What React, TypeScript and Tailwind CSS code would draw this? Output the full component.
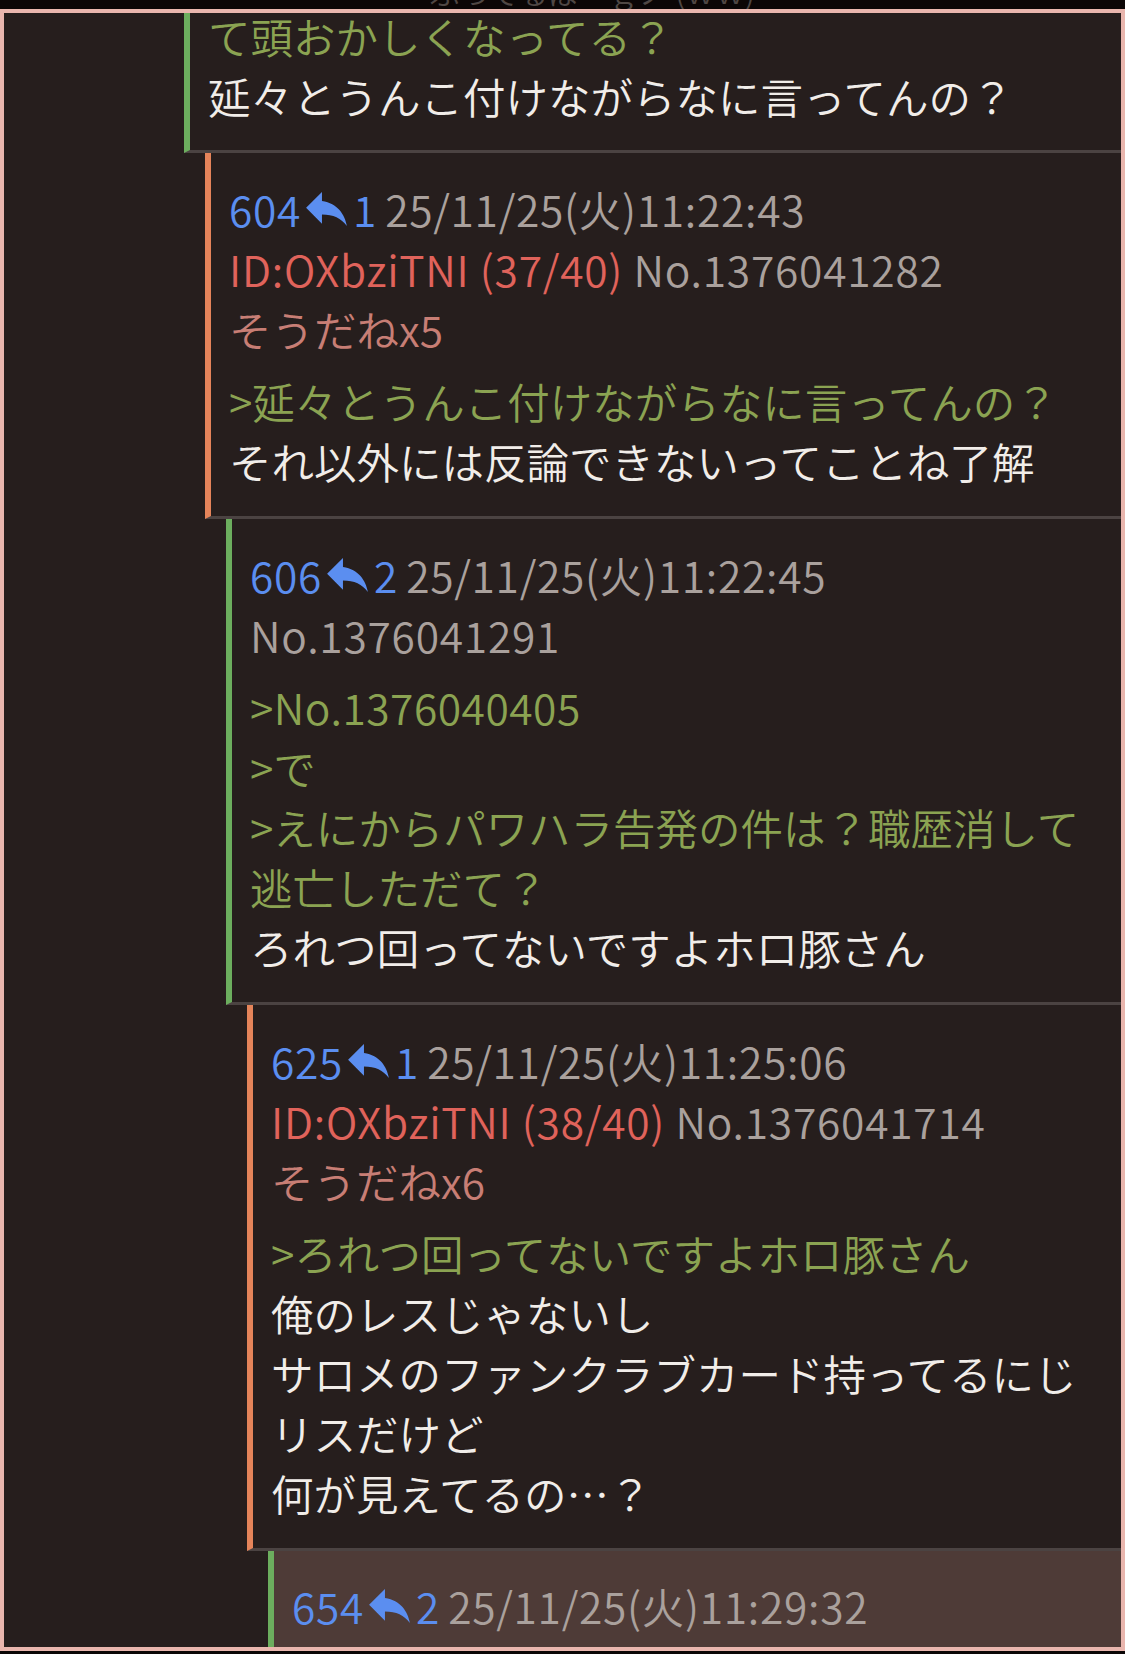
import React from "react";

const FONT = { fontFamily: '"Noto Sans CJK JP", "Noto Sans", sans-serif' };

function ReplyIcon() {
  return (
    <svg viewBox="3 5 18 15" width="41" height="34" className="ml-[5px] mr-[6px] shrink-0" aria-hidden>
      <path d="M10 9V5l-7 7 7 7v-4.1c5 0 8.5 1.6 11 5.1-1-5-4-10-11-11z" fill="#5b8ef0" />
    </svg>
  );
}

function Header({ no, replies, date }: { no: string; replies: string; date: string }) {
  return (
    <div className="flex items-center leading-[60px] whitespace-nowrap tracking-[0.7px]">
      <span className="text-[#5b8ef0]">{no}</span>
      <ReplyIcon />
      <span className="text-[#5b8ef0]">{replies}</span>
      <span className="ml-[8px] text-[#aaa19d]">{date}</span>
    </div>
  );
}

function IdLine({ id, count, num }: { id: string; count: string; num: string }) {
  return (
    <div className="leading-[60px] whitespace-nowrap tracking-[0.75px]">
      <span className="text-[#e0635b]">
        {id} {count}
      </span>{" "}
      <span className="text-[#aaa19d]">{num}</span>
    </div>
  );
}

function Soudane({ text }: { text: string }) {
  return <div className="leading-[60px] whitespace-nowrap text-[#c87e75]">{text}</div>;
}

function Quote({ text, latin }: { text: string; latin?: boolean }) {
  return (
    <div className={latin ? "leading-[60px] whitespace-nowrap text-[#8ba352] tracking-[0.5px]" : "leading-[60px] whitespace-nowrap text-[#8ba352]"}>
      {text}
    </div>
  );
}

function Body({ text }: { text: string }) {
  return <div className="leading-[60px] whitespace-nowrap text-[#f1ede9]">{text}</div>;
}

export default function App() {
  return (
    <div className="min-h-[1654px] w-[1125px] bg-[#0b0606] text-[42.5px] font-[350]" style={FONT}>
      <div className="h-[9px] overflow-hidden flex flex-col items-center">
        <div className="leading-[30px] h-[30px] shrink-0 text-[30px] text-[#4f4744] whitespace-nowrap -mt-[24px] pl-[60px]">
          ぶってるぽ～ｇノ (ｗｗ)
        </div>
      </div>
      <div className="h-[1642px] border-[4px] border-[#e9b6ae] bg-[#261e1d] overflow-hidden">
        {/* post 1 (continued from above) */}
        <div className="ml-[180px] -mt-[7px] border-l-[6px] border-b-[3px] border-l-[#6cae5e] border-b-[#4b4342] pl-[18px] pb-[24px]">
          <Quote text="て頭おかしくなってる？" />
          <Body text="延々とうんこ付けながらなに言ってんの？" />
        </div>

        {/* 604 */}
        <div className="ml-[201px] border-l-[6px] border-b-[3px] border-l-[#e5845a] border-b-[#4b4342] pl-[18px] pt-[26px] pb-[25px]">
          <Header no="604" replies="1" date="25/11/25(火)11:22:43" />
          <IdLine id="ID:OXbziTNI" count="(37/40)" num="No.1376041282" />
          <Soudane text="そうだねx5" />
          <div className="mt-[12px]">
            <Quote text=">延々とうんこ付けながらなに言ってんの？" />
            <Body text="それ以外には反論できないってことね了解" />
          </div>
        </div>

        {/* 606 */}
        <div className="ml-[222px] border-l-[6px] border-b-[3px] border-l-[#6cae5e] border-b-[#4b4342] pl-[18px] pt-[26px] pb-[25px]">
          <Header no="606" replies="2" date="25/11/25(火)11:22:45" />
          <div className="leading-[60px] whitespace-nowrap text-[#aaa19d] tracking-[0.75px]">No.1376041291</div>
          <div className="mt-[12px]">
            <Quote text=">No.1376040405" latin />
            <Quote text=">で" />
            <Quote text=">えにからパワハラ告発の件は？職歴消して" />
            <Quote text="逃亡しただて？" />
            <Body text="ろれつ回ってないですよホロ豚さん" />
          </div>
        </div>

        {/* 625 */}
        <div className="ml-[243px] border-l-[6px] border-b-[3px] border-l-[#e5845a] border-b-[#4b4342] pl-[18px] pt-[26px] pb-[25px]">
          <Header no="625" replies="1" date="25/11/25(火)11:25:06" />
          <IdLine id="ID:OXbziTNI" count="(38/40)" num="No.1376041714" />
          <Soudane text="そうだねx6" />
          <div className="mt-[12px]">
            <Quote text=">ろれつ回ってないですよホロ豚さん" />
            <Body text="俺のレスじゃないし" />
            <Body text="サロメのファンクラブカード持ってるにじ" />
            <Body text="リスだけど" />
            <Body text="何が見えてるの…？" />
          </div>
        </div>

        {/* 654 highlighted */}
        <div className="ml-[264px] h-[200px] border-l-[6px] border-l-[#6cae5e] bg-[#4e3b37] pl-[18px] pt-[25px]">
          <Header no="654" replies="2" date="25/11/25(火)11:29:32" />
        </div>
      </div>
    </div>
  );
}
